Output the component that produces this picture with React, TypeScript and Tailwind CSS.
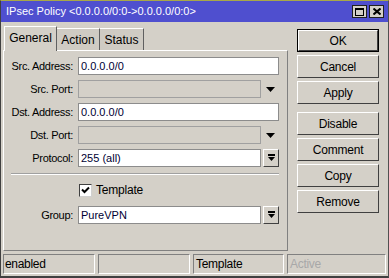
import React from "react";

const font = { fontFamily: '"Liberation Sans", Arial, sans-serif' };

function Arrow() {
  return (
    <svg width="9" height="5" viewBox="0 0 9 5">
      <polygon points="0,0 9,0 4.5,5" fill="#000" />
    </svg>
  );
}

function ListButton() {
  return (
    <div className="w-[16px] h-[18px] ml-[2px] flex items-center justify-center bg-[#d4d0c8] border border-t-white border-l-white border-r-[#404040] border-b-[#404040]">
      <svg width="9" height="8" viewBox="0 0 9 8">
        <rect x="1" y="0" width="7" height="2" fill="#000" />
        <polygon points="1,3 8,3 4.5,7" fill="#000" />
      </svg>
    </div>
  );
}

function Field({ label, value, kind }: { label: string; value?: string; kind: "text" | "disabled" | "list" }) {
  return (
    <div className="flex items-center h-[18px]">
      <div className="w-[70px] text-right pr-[1px] tracking-[-0.3px]">{label}</div>
      <div className="ml-[4px] flex items-center">
        {kind === "text" && (
          <div className="w-[201px] h-[18px] bg-white border border-[#8c8c8c] pl-[2px] leading-[16px] text-[#000033]">{value}</div>
        )}
        {kind === "disabled" && (
          <>
            <div className="w-[183px] h-[18px] bg-[#d4d0c8] border border-[#a0a0a0]" />
            <div className="w-[18px] flex justify-center">
              <Arrow />
            </div>
          </>
        )}
        {kind === "list" && (
          <>
            <div className="w-[183px] h-[18px] bg-white border border-[#8c8c8c] pl-[2px] leading-[16px] text-[#000033]">{value}</div>
            <ListButton />
          </>
        )}
      </div>
    </div>
  );
}

function Btn({ label, def }: { label: string; def?: boolean }) {
  return (
    <div className={`w-[82px] h-[23px] ${def ? "border border-black" : ""}`}>
      <div className="w-full h-full flex items-center justify-center border border-t-white border-l-white border-r-[#404040] border-b-[#404040] bg-[#d4d0c8] text-[12px] tracking-[-0.2px]">
        {label}
      </div>
    </div>
  );
}

export default function App() {
  return (
    <div className="w-[389px] h-[278px] bg-[#d4d0c8] text-[11px] text-black flex flex-col border border-[#404040] border-t-[#a8a848] border-r-[#505050] border-b-2" style={font}>
      {/* title bar */}
      <div className="h-[21px] bg-[#4f4fcf] flex items-center pl-[5px] pr-[4px] text-white text-[11px]">
        <span className="flex-1">IPsec Policy &lt;0.0.0.0/0:0-&gt;0.0.0.0/0:0&gt;</span>
        <div className="w-[15px] h-[13px] bg-[#d4d0c8] border border-[#202020] flex items-center justify-center">
          <div className="w-[9px] h-[8px] border border-black border-t-2" />
        </div>
        <div className="w-[15px] h-[13px] ml-[2px] bg-[#d4d0c8] border border-[#202020] flex items-center justify-center">
          <svg width="8" height="7" viewBox="0 0 8 7">
            <path d="M0.5 0.5 L7.5 6.5 M7.5 0.5 L0.5 6.5" stroke="#000" strokeWidth="2" />
          </svg>
        </div>
      </div>

      <div className="flex h-[229px]">
        {/* tabs + panel */}
        <div className="ml-[2px] w-[285px] flex flex-col">
          <div className="h-[28px] flex items-end pl-[1px]">
            <div className="relative z-10 w-[53px] h-[25px] -mb-[1px] bg-[#d4d0c8] border-l border-t border-white border-r border-r-[#606060] flex items-center justify-center pb-[2px] text-[12px]">
              General
            </div>
            <div className="w-[43px] h-[22px] bg-[#cfcbc3] border-t border-white border-r border-r-[#606060] flex items-center justify-center text-[12px]">
              Action
            </div>
            <div className="w-[44px] h-[22px] bg-[#cfcbc3] border-t border-white border-r border-r-[#606060] flex items-center justify-center text-[12px]">
              Status
            </div>
          </div>
          <div className="flex-1 border border-t-white border-l-white border-r-[#808080] border-b-[#808080] pt-[6px] flex flex-col">
            <div className="flex flex-col gap-[5px]">
              <Field label="Src. Address:" value="0.0.0.0/0" kind="text" />
              <Field label="Src. Port:" kind="disabled" />
              <Field label="Dst. Address:" value="0.0.0.0/0" kind="text" />
              <Field label="Dst. Port:" kind="disabled" />
              <Field label="Protocol:" value="255 (all)" kind="list" />
            </div>
            <div className="mt-[6px] ml-[7px] w-[268px] border-t border-[#a0a0a0] border-b border-b-white" />
            <div className="mt-[8px] ml-[75px] flex items-center h-[14px]">
              <div className="w-[13px] h-[13px] bg-white border border-[#404040] border-r-[#d0d0d0] border-b-[#d0d0d0] flex items-center justify-center">
                <svg width="9" height="8" viewBox="0 0 9 8">
                  <path d="M1 3.5 L3.5 6 L8 1.5" stroke="#000" strokeWidth="2" fill="none" />
                </svg>
              </div>
              <span className="ml-[4px] text-[12px] tracking-[-0.2px]">Template</span>
            </div>
            <div className="mt-[9px]">
              <Field label="Group:" value="PureVPN" kind="list" />
            </div>
          </div>
        </div>

        {/* buttons */}
        <div className="ml-[9px] pt-[7px] flex flex-col">
          <Btn label="OK" def />
          <div className="mt-[3px] flex flex-col gap-[3px]">
            <Btn label="Cancel" />
            <Btn label="Apply" />
          </div>
          <div className="mt-[8px] flex flex-col gap-[3px]">
            <Btn label="Disable" />
            <Btn label="Comment" />
            <Btn label="Copy" />
            <Btn label="Remove" />
          </div>
        </div>
      </div>

      {/* status bar */}
      <div className="mt-[3px] h-[20px] flex pl-[2px] gap-[3px] text-[12px] tracking-[-0.3px]">
        <div className="w-[92px] border border-[#808080] border-r-white border-b-white pl-[1px] leading-[18px]">enabled</div>
        <div className="w-[92px] border border-[#808080] border-r-white border-b-white" />
        <div className="w-[91px] border border-[#808080] border-r-white border-b-white pl-[2px] leading-[18px]">Template</div>
        <div className="w-[99px] border border-[#808080] border-r-white border-b-white pl-[2px] leading-[18px] text-[#a8a8a8]">Active</div>
      </div>
    </div>
  );
}
